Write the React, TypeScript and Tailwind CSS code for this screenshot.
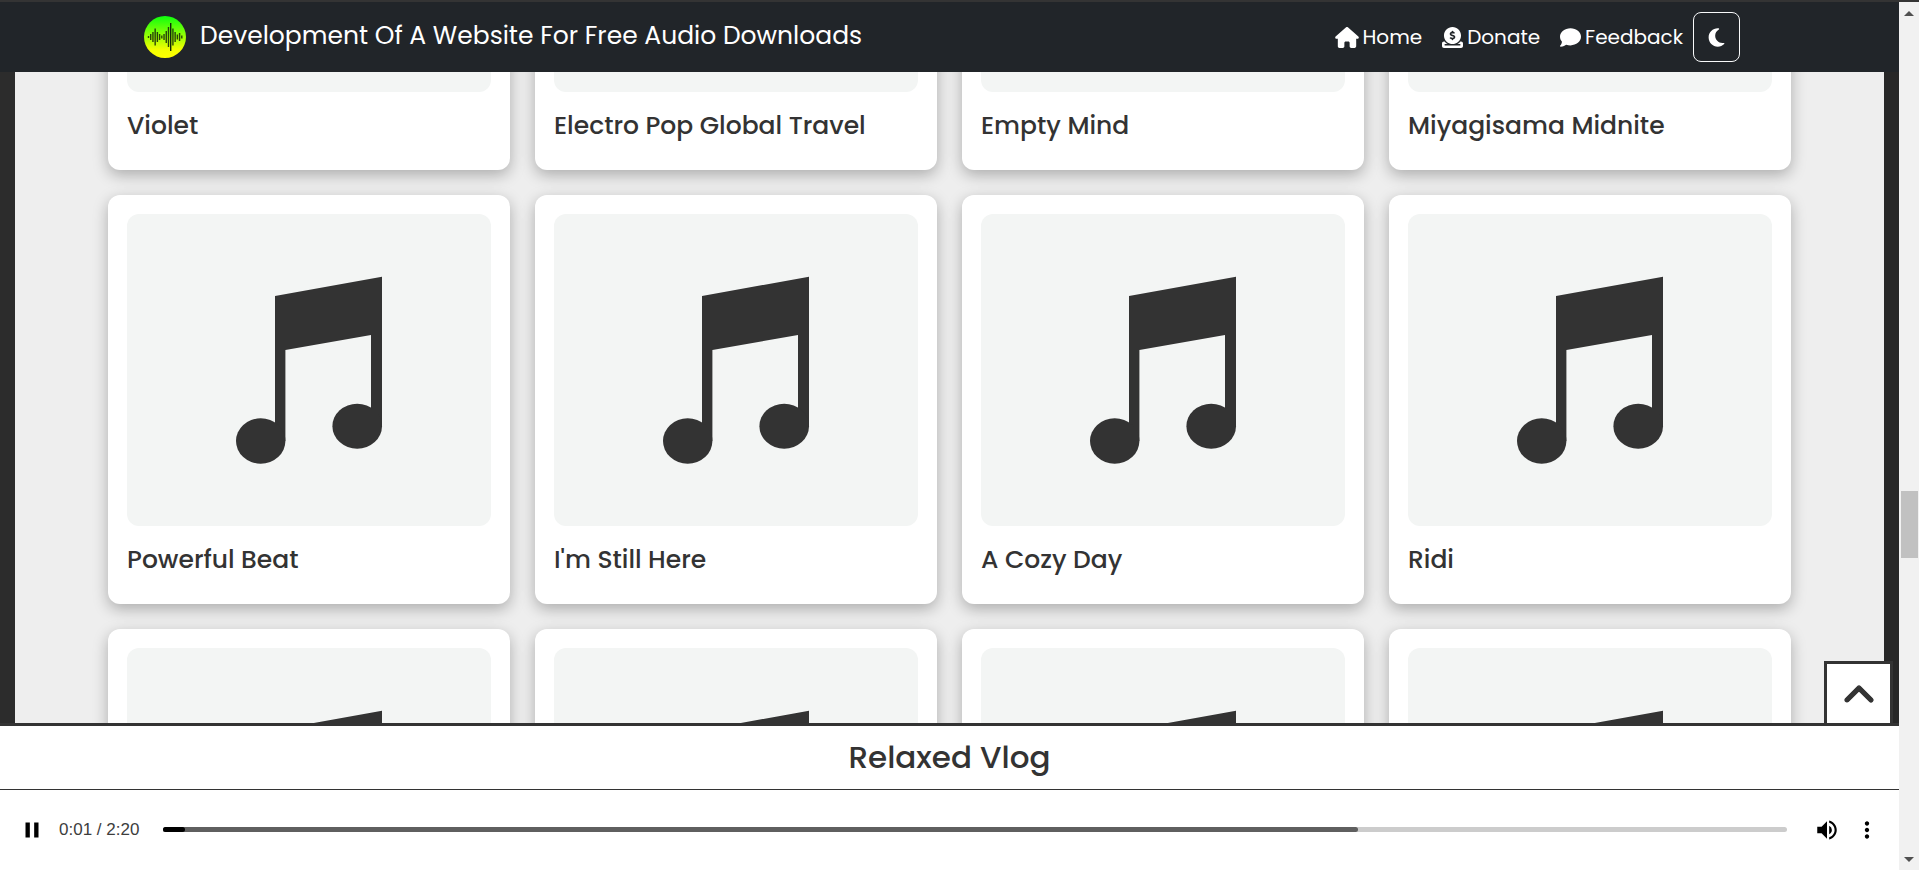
import { FaHouse, FaCircleDollarToSlot, FaComment, FaMoon, FaChevronUp } from "react-icons/fa6";
import { MdPause, MdVolumeUp, MdMoreVert } from "react-icons/md";

const songs = [
  "Violet",
  "Electro Pop Global Travel",
  "Empty Mind",
  "Miyagisama Midnite",
  "Powerful Beat",
  "I'm Still Here",
  "A Cozy Day",
  "Ridi",
  "",
  "",
  "",
  "",
];

const links = [
  { label: "Home", Icon: FaHouse, size: "h-[21px] w-6" },
  { label: "Donate", Icon: FaCircleDollarToSlot, size: "size-[21px]" },
  { label: "Feedback", Icon: FaComment, size: "size-[21px]" },
];

const waveBars = [2, 6, 10, 17, 10, 6, 3, 6, 12, 20, 28, 17, 10, 5, 8, 3];

function Logo() {
  return (
    <svg viewBox="0 0 42 42" className="size-[42px]" aria-hidden="true">
      <defs>
        <linearGradient id="logo-fill" x1="0" y1="0" x2="0" y2="1">
          <stop offset="0" stopColor="#0dff0d" />
          <stop offset="0.8" stopColor="#f4ff00" />
          <stop offset="1" stopColor="#ffff00" />
        </linearGradient>
      </defs>
      <circle cx="21" cy="21" r="21" fill="url(#logo-fill)" />
      {waveBars.map((h, i) => (
        <rect
          key={i}
          x={3.8 + i * 2.22}
          y={21 - h / 2}
          width="1.4"
          height={h}
          fill="#10240a"
          fillOpacity={h > 25 ? 1 : 0.85}
        />
      ))}
    </svg>
  );
}

function NoteArt() {
  return (
    <svg viewBox="0 0 364 312" className="block w-full rounded-xl bg-[#f3f5f4]" aria-hidden="true">
      <g fill="#333333">
        <path d="M148 82 255 62.7V212.5H244V121L158.4 136V227H148Z" />
        <ellipse cx="230.2" cy="212.2" rx="24.8" ry="22.5" />
        <ellipse cx="133.7" cy="227" rx="24.7" ry="22.7" />
      </g>
    </svg>
  );
}

function SongCard({ title }: { title: string }) {
  return (
    <article className="rounded-xl bg-white p-[19px] shadow-[0_5px_15px_rgba(0,0,0,0.28)]">
      <NoteArt />
      <div className="mt-[14px] mb-[5px] min-h-10">
        {title && <h2 className="text-[25px] leading-10 font-medium text-[#333333]">{title}</h2>}
      </div>
    </article>
  );
}

function Header() {
  return (
    <header className="flex h-[70px] shrink-0 items-center justify-between bg-[#212529] pr-[159px] pl-36 text-white">
      <a href="#" className="flex items-center gap-[14px]">
        <Logo />
        <span className="pb-0.5 text-[25px] leading-9">Development Of A Website For Free Audio Downloads</span>
      </a>
      <nav className="flex items-center gap-[10px]">
        <div className="flex items-center gap-5">
          {links.map(({ label, Icon, size }) => (
            <a key={label} href="#" className="flex items-center gap-1 text-xl">
              <Icon className={size} />
              {label}
            </a>
          ))}
        </div>
        <button
          type="button"
          aria-label="Dark mode"
          className="flex h-[50px] w-[47px] items-center justify-center rounded-lg border border-[#f8f9fa]"
        >
          <FaMoon className="size-[21px]" />
        </button>
      </nav>
    </header>
  );
}

function Player() {
  return (
    <section aria-label="Player" className="shrink-0 border-t-[3px] border-[#333333] bg-white">
      <h2 className="border-b border-[#333333] py-2 text-center text-[31px] leading-[47px] font-medium text-[#333333]">
        Relaxed Vlog
      </h2>
      <div className="flex h-20 items-center px-[19px] pb-px">
        <button type="button" aria-label="Pause" className="text-black">
          <MdPause className="size-[26px]" />
        </button>
        <span className="ml-[14px] font-['Liberation_Sans',Arial,sans-serif] text-[17px] text-[#3d3d3d]">
          0:01 / 2:20
        </span>
        <div
          role="progressbar"
          aria-label="Playback position"
          aria-valuenow={1}
          aria-valuemax={140}
          className="ml-6 grid h-[5px] flex-1 rounded-full bg-[#cccccc]"
        >
          <div className="col-start-1 row-start-1 h-[5px] w-[73.6%] rounded-full bg-[#5f5f5f]" />
          <div className="col-start-1 row-start-1 h-[5px] w-[22px] rounded-full bg-black" />
        </div>
        <button type="button" aria-label="Mute" className="ml-[27px] text-black">
          <MdVolumeUp className="size-[26px]" />
        </button>
        <button type="button" aria-label="More options" className="ml-[14px] text-black">
          <MdMoreVert className="size-[26px]" />
        </button>
      </div>
    </section>
  );
}

function Scrollbar() {
  return (
    <div aria-hidden="true" className="flex w-5 shrink-0 flex-col items-center bg-[#f1f1f1] pt-[9px] pb-2">
      <div className="border-x-[5px] border-b-[5px] border-x-transparent border-b-[#505050]" />
      <div className="grow-[475]" />
      <div className="h-[67px] w-[17px] bg-[#c1c1c1]" />
      <div className="grow-[299]" />
      <div className="border-x-[5px] border-t-[5px] border-x-transparent border-t-[#505050]" />
    </div>
  );
}

export default function App() {
  return (
    <div className="flex h-screen border-t-2 border-[#343434] font-['Poppins',Inter,sans-serif]">
      <div className="flex min-w-0 flex-1 flex-col">
        <Header />
        <div className="relative flex min-h-0 flex-1 flex-col">
          <main className="flex min-h-0 flex-1 items-center overflow-hidden border-r-[15px] border-l-[15px] border-r-[#272727] border-l-[#2c2c2c] bg-[#eeeeee] px-[93px] pt-1">
            <div className="grid min-w-0 flex-1 grid-cols-4 gap-[25px]">
              {songs.map((title, i) => (
                <SongCard key={i} title={title} />
              ))}
            </div>
          </main>
          <button
            type="button"
            aria-label="Back to top"
            className="absolute right-[6px] bottom-0 flex h-[62px] w-[69px] items-center justify-center border-x-[3px] border-t-[3px] border-[#333333] bg-white pt-1 text-[#333333]"
          >
            <FaChevronUp className="size-8 stroke-current stroke-[20px]" />
          </button>
        </div>
        <Player />
      </div>
      <Scrollbar />
    </div>
  );
}
